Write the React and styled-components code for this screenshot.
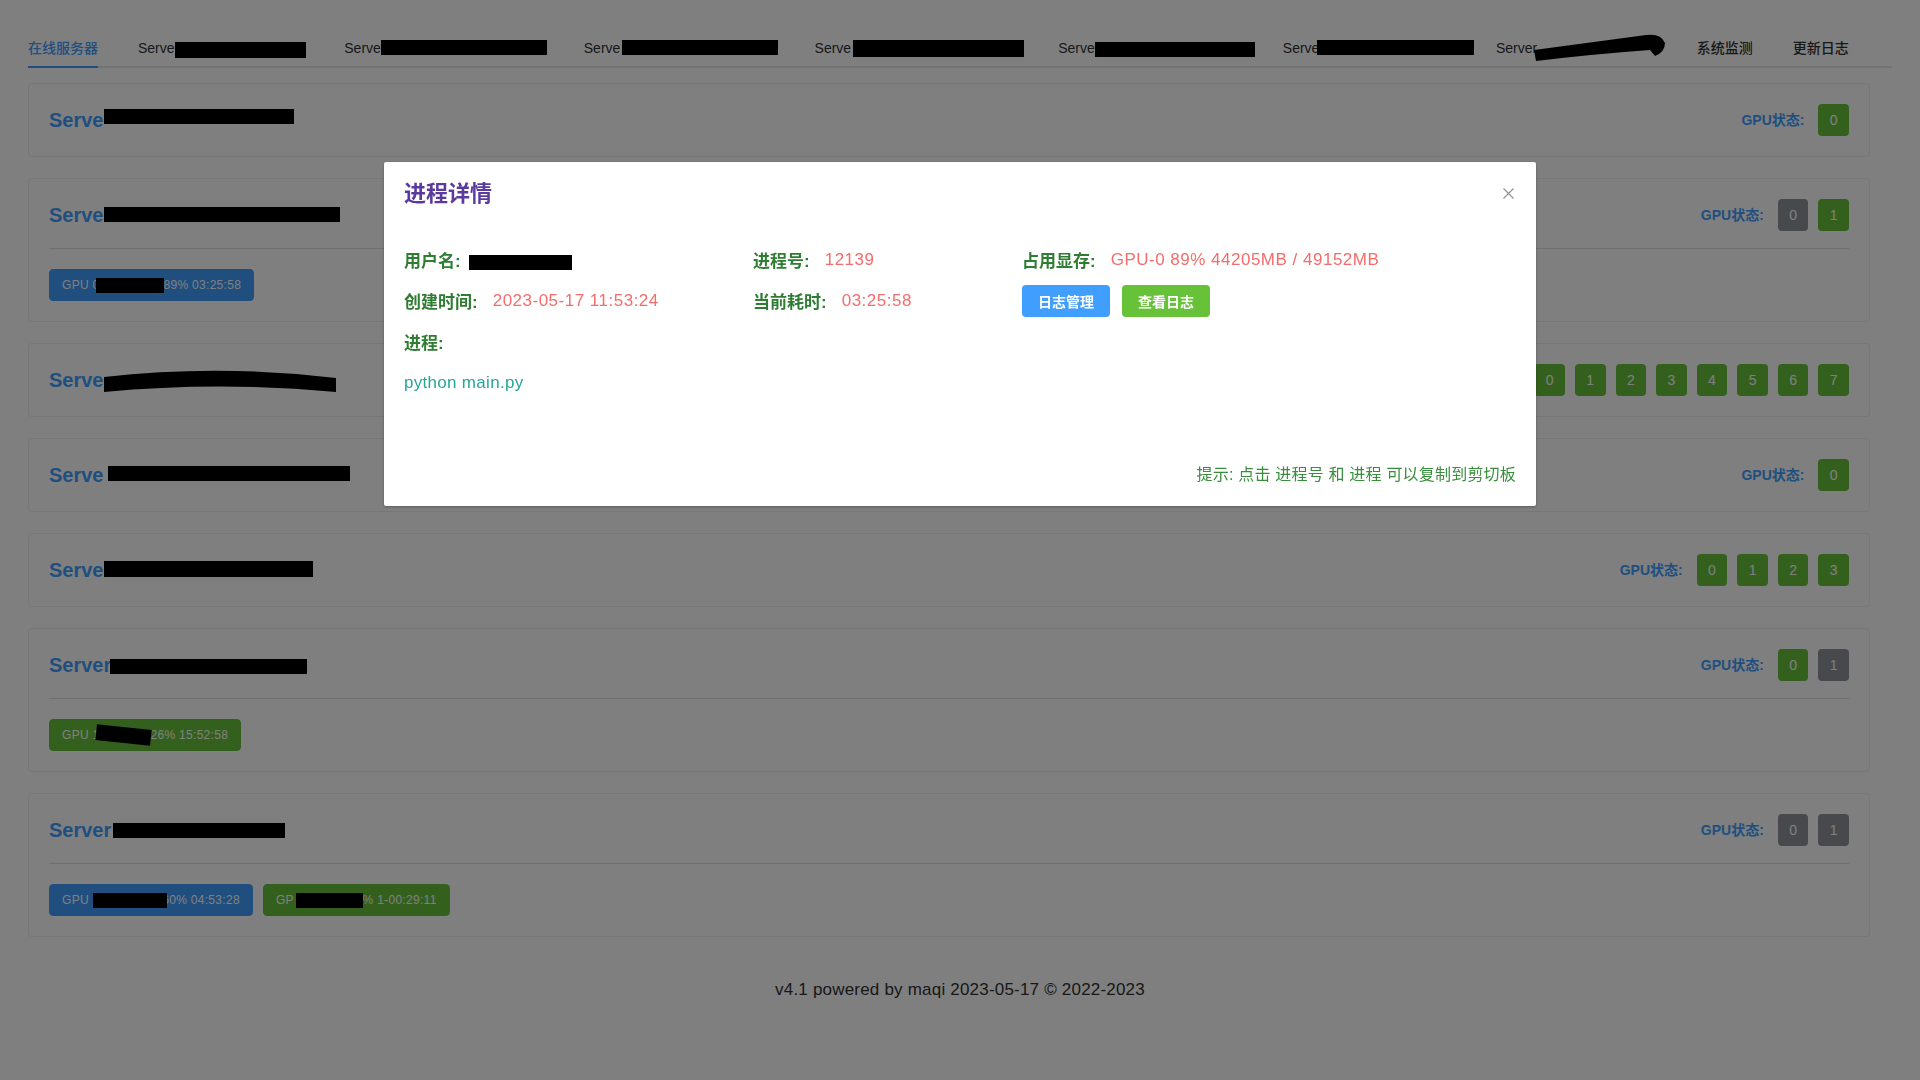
import React from "react";
import styled, { createGlobalStyle } from "styled-components";

const GlobalStyle = createGlobalStyle`
  html, body { margin: 0; padding: 0; background: #fff; }
  body {
    font-family: "Liberation Sans", "Noto Sans CJK SC", sans-serif;
    color: #303133;
  }
`;

const Page = styled.div`
  padding: 26px 28px 0;
`;

const TabNav = styled.nav`
  display: flex;
  height: 42px;
  box-shadow: inset 0 -2px 0 #e4e7ed;
  margin-bottom: 15px;
`;

const TabItem = styled.div`
  height: 42px;
  padding: 0 20px;
  &:first-child { padding-left: 0; }
  &:last-child { padding-right: 0; }
`;

const TabText = styled.div`
  position: relative;
  height: 42px;
  font-size: 14px;
  font-weight: 500;
  line-height: 44px;
  white-space: nowrap;
  color: ${(p) => (p.$active ? "#409eff" : "#303133")};
  &::after {
    content: "";
    position: absolute;
    left: 0;
    right: 0;
    bottom: 0;
    height: 2px;
    background: ${(p) => (p.$active ? "#409eff" : "transparent")};
  }
`;

const Redact = styled.span`
  position: relative;
  z-index: 1;
  display: inline-block;
  vertical-align: top;
  width: ${(p) => p.$w}px;
  height: ${(p) => p.$h ?? 15}px;
  margin: ${(p) => p.$mt ?? 0}px ${(p) => p.$mr ?? 0}px 0 ${(p) => p.$ml ?? 0}px;
  background: #000;
  transform: ${(p) => (p.$rot ? `rotate(${p.$rot}deg)` : "none")};
`;

const Scribble = styled.span`
  position: relative;
  z-index: 1;
  display: inline-block;
  vertical-align: top;
  width: ${(p) => p.$w}px;
  height: ${(p) => p.$h}px;
  margin: ${(p) => p.$mt}px ${(p) => p.$mr ?? 0}px 0 ${(p) => p.$ml ?? 0}px;
  svg { display: block; overflow: visible; }
`;

const CardList = styled.div`
  display: flex;
  flex-direction: column;
  gap: 21px;
  margin-right: 22px;
`;

const Card = styled.section`
  background: #fff;
  border: 1px solid #ebeef5;
  border-radius: 4px;
  padding: 20px;
`;

const CardHead = styled.div`
  display: flex;
  align-items: center;
  justify-content: space-between;
  height: 32px;
  padding-bottom: ${(p) => (p.$divided ? "17px" : "0")};
  border-bottom: ${(p) => (p.$divided ? "1px solid #dcdfe6" : "none")};
`;

const Title = styled.h3`
  margin: 0;
  font-size: 20px;
  font-weight: 700;
  line-height: 32px;
  height: 32px;
  color: #409eff;
  white-space: nowrap;
`;

const GpuStatus = styled.div`
  display: flex;
  align-items: center;
  gap: 10px;
`;

const GpuLabel = styled.span`
  font-size: 14px;
  font-weight: 700;
  color: #409eff;
  margin-right: 4px;
  margin-bottom: 3px;
`;

const GpuBadge = styled.span`
  display: inline-flex;
  align-items: center;
  justify-content: center;
  box-sizing: border-box;
  height: 32px;
  padding: 0 11.4px;
  border-radius: 4px;
  font-size: 14px;
  color: #fff;
  background: ${(p) => (p.$busy ? "#909399" : "#67c23a")};
`;

const CardBody = styled.div`
  display: flex;
  gap: 10px;
  padding-top: 20px;
`;

const ProcTag = styled.span`
  display: inline-block;
  box-sizing: border-box;
  height: 32px;
  padding: 0 12px;
  line-height: 30px;
  border: 1px solid ${(p) => p.$c};
  background: ${(p) => p.$c};
  color: #fff;
  border-radius: 4px;
  font-size: 12px;
  letter-spacing: 0.3px;
  white-space: nowrap;
`;

const Footer = styled.footer`
  padding: 41px 0 20px;
  text-align: center;
  font-size: 17px;
  letter-spacing: 0.2px;
  line-height: 24px;
  color: #303133;
`;

const Overlay = styled.div`
  position: fixed;
  inset: 0;
  background: rgba(0, 0, 0, 0.5);
  z-index: 10;
`;

const DialogWrap = styled.div`
  position: fixed;
  inset: 0;
  z-index: 11;
  overflow: auto;
`;

const Dialog = styled.div`
  position: relative;
  width: 60%;
  margin: 15vh auto 50px;
  background: #fff;
  border-radius: 2px;
  box-shadow: 0 1px 3px rgba(0, 0, 0, 0.3);
`;

const DialogHeader = styled.div`
  padding: 20px 20px 10px;
`;

const DialogTitle = styled.span`
  display: block;
  font-size: 22px;
  line-height: 24px;
  font-weight: 700;
  color: #5b3a9e;
`;

const CloseBtn = styled.button`
  position: absolute;
  top: 26px;
  right: 22px;
  width: 11px;
  height: 11px;
  padding: 0;
  border: none;
  background: transparent;
  cursor: pointer;
  svg { display: block; }
`;

const DialogBody = styled.div`
  padding: 23px 20px 51px;
`;

const InfoGrid = styled.div`
  display: grid;
  grid-template-columns: 349px 269px 1fr;
  grid-auto-rows: 41px;
  align-items: center;
`;

const Cell = styled.div`
  display: flex;
  align-items: center;
  white-space: nowrap;
  grid-column: ${(p) => (p.$full ? "1 / -1" : "auto")};
`;

const Label = styled.span`
  font-size: 17px;
  font-weight: 600;
  color: #2e7d32;
  margin-right: 15px;
`;

const Value = styled.span`
  font-size: 17px;
  letter-spacing: 0.5px;
  color: #f56c6c;
`;

const ValueRedact = styled.span`
  display: inline-block;
  width: 103px;
  height: 15px;
  margin: 6px 0 0 -7px;
  background: #000;
`;

const ProcessCmd = styled.span`
  font-size: 17px;
  letter-spacing: 0.3px;
  color: #26a69a;
`;

const ActionBtn = styled.button`
  height: 32px;
  padding: 0 16px;
  margin-right: 12px;
  border: none;
  border-radius: 4px;
  font-family: inherit;
  font-size: 14px;
  font-weight: 700;
  color: #fff;
  background: ${(p) => p.$c};
  cursor: pointer;
`;

const DialogFooter = styled.div`
  padding: 10px 20px 20px;
  text-align: right;
`;

const Hint = styled.span`
  font-size: 16px;
  line-height: 22px;
  letter-spacing: 0.2px;
  color: #388e3c;
`;

const tabs = [
  { label: "在线服务器", active: true },
  { pre: "Serve", w: 131, ml: 0, mr: -1.3, mt: 16, h: 15.7 },
  { pre: "Serve", w: 166.5, ml: 0, mr: -3.6, mt: 14, h: 15 },
  { pre: "Serve", w: 155.5, ml: 2, mr: -3.3, mt: 14, h: 15 },
  { pre: "Serve", w: 171, ml: 2, mr: -6, mt: 14, h: 17 },
  { pre: "Serve", w: 160, ml: 0, mr: -11.9, mt: 15.7, h: 15 },
  { pre: "Serve", w: 157, ml: -2, mr: -18.5, mt: 14, h: 15 },
  { pre: "Server", scribble: true, ml: -3.6, mr: -8.7 },
  { label: "系统监测" },
  { label: "更新日志" },
];

const BLUE = "#409eff";
const GREEN = "#67c23a";

const cards = [
  { text: "Serve", box: { w: 190, mt: 5, ml: 0.5 }, gpus: "g", tags: [] },
  {
    text: "Serve",
    box: { w: 236, mt: 8, ml: 0.5 },
    gpus: "xg",
    tags: [{ c: BLUE, pre: "GPU 0", w: 68, ml: -4, post: "89% 03:25:58" }],
  },
  { text: "Serve", scribble: true, gpus: "gggggggg", tags: [] },
  { text: "Serve", box: { w: 242, mt: 7, ml: 4.8 }, gpus: "g", tags: [] },
  { text: "Serve", box: { w: 209, mt: 7, h: 16, ml: 0.5 }, gpus: "gggg", tags: [] },
  {
    text: "Server",
    box: { w: 197, mt: 10, ml: -1.5 },
    gpus: "gx",
    tags: [{ c: GREEN, pre: "GPU 1", w: 55, ml: -4, h: 16, mt: 7, rot: 6, post: "26% 15:52:58" }],
  },
  {
    text: "Server",
    box: { w: 172, mt: 9, ml: 2 },
    gpus: "xx",
    tags: [
      { c: BLUE, pre: "GPU ", w: 74, ml: 0.7, mr: -5, post: "60% 04:53:28" },
      { c: GREEN, pre: "GP", w: 67, ml: 1.7, post: "% 1-00:29:11" },
    ],
  },
];

function TabScribble({ ml, mr }) {
  return (
    <Scribble $w={132} $h={28} $mt={8} $ml={ml} $mr={mr}>
      <svg width="132" height="28" viewBox="0 0 132 28">
        <path
          d="M0,16 Q60,8 112,1 Q127,-1 131,9 Q131,18 121,22 L116,16 Q60,20 2,27 Z"
          fill="#000"
        />
      </svg>
    </Scribble>
  );
}

function TitleScribble() {
  return (
    <Scribble $w={232} $h={24} $mt={6} $ml={0.5}>
      <svg width="232" height="24" viewBox="0 0 232 24">
        <path d="M0,7 Q115,-6 232,8 L232,22 Q115,11 0,22 Z" fill="#000" />
      </svg>
    </Scribble>
  );
}

function ServerCard({ card }) {
  const divided = card.tags.length > 0;
  return (
    <Card>
      <CardHead $divided={divided}>
        <Title>
          {card.text}
          {card.scribble ? (
            <TitleScribble />
          ) : (
            <Redact $w={card.box.w} $h={card.box.h} $mt={card.box.mt} $ml={card.box.ml} />
          )}
        </Title>
        <GpuStatus>
          <GpuLabel>GPU状态:</GpuLabel>
          {card.gpus.split("").map((s, i) => (
            <GpuBadge key={i} $busy={s === "x"}>
              {i}
            </GpuBadge>
          ))}
        </GpuStatus>
      </CardHead>
      {divided && (
        <CardBody>
          {card.tags.map((t, i) => (
            <ProcTag key={i} $c={t.c}>
              {t.pre}
              <Redact $w={t.w} $h={t.h ?? 15} $mt={t.mt ?? 7.5} $ml={t.ml} $mr={t.mr} $rot={t.rot} />
              {t.post}
            </ProcTag>
          ))}
        </CardBody>
      )}
    </Card>
  );
}

export default function App() {
  return (
    <>
      <GlobalStyle />
      <Page>
        <TabNav>
          {tabs.map((t, i) => (
            <TabItem key={i}>
              <TabText $active={t.active}>
                {t.label ? (
                  t.label
                ) : (
                  <>
                    {t.pre}
                    {t.scribble ? (
                      <TabScribble ml={t.ml} mr={t.mr} />
                    ) : (
                      <Redact $w={t.w} $h={t.h} $mt={t.mt} $ml={t.ml} $mr={t.mr} />
                    )}
                  </>
                )}
              </TabText>
            </TabItem>
          ))}
        </TabNav>
        <CardList>
          {cards.map((c, i) => (
            <ServerCard key={i} card={c} />
          ))}
        </CardList>
        <Footer>v4.1 powered by maqi 2023-05-17 © 2022-2023</Footer>
      </Page>

      <Overlay />
      <DialogWrap>
        <Dialog>
          <DialogHeader>
            <DialogTitle>进程详情</DialogTitle>
            <CloseBtn aria-label="close">
              <svg width="11" height="11" viewBox="0 0 11 11">
                <path d="M0.5,0.5 L10.5,10.5 M10.5,0.5 L0.5,10.5" stroke="#909399" strokeWidth="1.2" />
              </svg>
            </CloseBtn>
          </DialogHeader>
          <DialogBody>
            <InfoGrid>
              <Cell>
                <Label>用户名:</Label>
                <ValueRedact />
              </Cell>
              <Cell>
                <Label>进程号:</Label>
                <Value>12139</Value>
              </Cell>
              <Cell>
                <Label>占用显存:</Label>
                <Value>GPU-0 89% 44205MB / 49152MB</Value>
              </Cell>
              <Cell>
                <Label>创建时间:</Label>
                <Value>2023-05-17 11:53:24</Value>
              </Cell>
              <Cell>
                <Label>当前耗时:</Label>
                <Value>03:25:58</Value>
              </Cell>
              <Cell>
                <ActionBtn $c="#409eff">日志管理</ActionBtn>
                <ActionBtn $c="#67c23a">查看日志</ActionBtn>
              </Cell>
              <Cell $full>
                <Label>进程:</Label>
              </Cell>
              <Cell $full>
                <ProcessCmd>python main.py</ProcessCmd>
              </Cell>
            </InfoGrid>
          </DialogBody>
          <DialogFooter>
            <Hint>提示: 点击 进程号 和 进程 可以复制到剪切板</Hint>
          </DialogFooter>
        </Dialog>
      </DialogWrap>
    </>
  );
}
